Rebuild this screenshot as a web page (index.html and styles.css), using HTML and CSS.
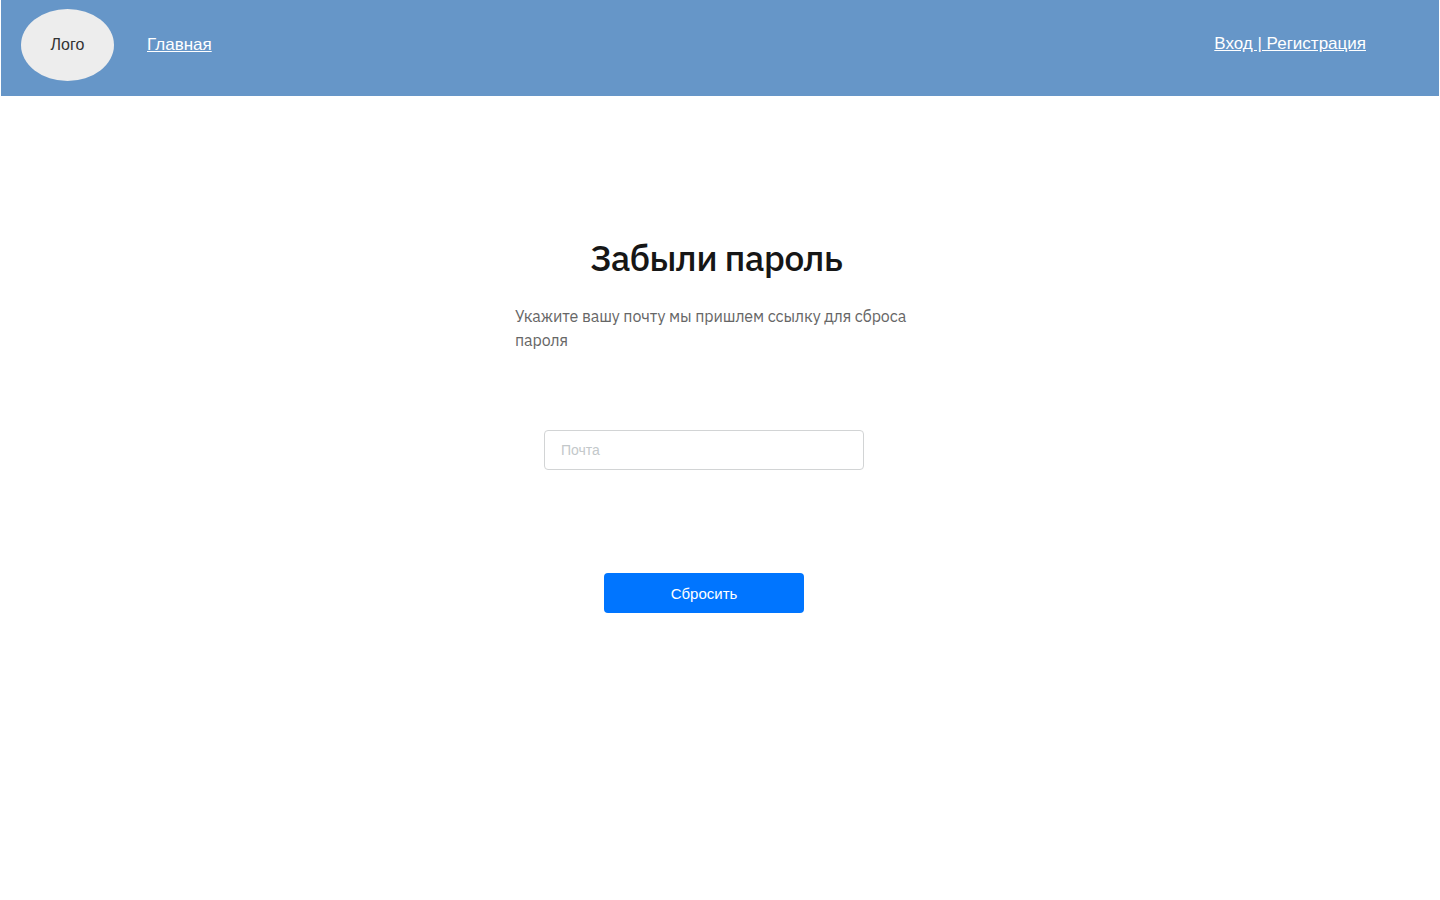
FILE: index.html
```html
<!DOCTYPE html>
<html lang="ru">
<head>
<meta charset="utf-8">
<title>Забыли пароль</title>
<link rel="stylesheet" href="styles.css">
</head>
<body>
<header class="header">
  <div class="logo">Лого</div>
  <a class="home" href="#">Главная</a>
  <a class="auth" href="#">Вход | Регистрация</a>
</header>
<main class="main">
  <h1 class="title">Забыли пароль</h1>
  <p class="hint">Укажите вашу почту мы пришлем ссылку для сброса<br>пароля</p>
  <form class="form">
    <input class="email" type="email" placeholder="Почта">
    <button class="submit" type="button">Сбросить</button>
  </form>
</main>
</body>
</html>
```
FILE: styles.css
```css
* { box-sizing: border-box; }
body { margin: 0; height: 900px; overflow: hidden; background: #fff; font-family: "Liberation Sans", Arial, sans-serif; }
.header { display: flex; align-items: flex-start; height: 96px; margin: 0 1px; padding: 9px 73px 0 20px; background: #6696c8; }
.logo { display: flex; align-items: center; justify-content: center; width: 93px; height: 72px; border-radius: 50%; background: #ededed; color: #333; font-size: 16px; }
.home, .auth { color: #fff; font-size: 17px; line-height: 20px; white-space: nowrap; }
.home { margin: 26px 0 0 33px; }
.auth { margin: 25px 0 0 auto; }
.main { display: flex; flex-direction: column; align-items: flex-start; width: 408px; margin: 138px 0 0 515px; font-family: "IBM Plex Sans", "Noto Sans", sans-serif; }
.title { margin: 0 0 0 75px; color: #161616; font-size: 36px; font-weight: 500; line-height: 48px; letter-spacing: -0.8px; white-space: nowrap; }
.hint { margin: 22px 0 0; color: #666; font-size: 16px; line-height: 24px; letter-spacing: -0.1px; white-space: nowrap; }
.form { display: flex; flex-direction: column; align-items: center; width: 320px; margin: 78px 0 0 29px; }
.email { width: 320px; height: 40px; padding: 0 16px; border: 1px solid #d2d4d5; border-radius: 4px; background: #fff; font: 14px "Liberation Sans", Arial, sans-serif; outline: 0; }
.email::placeholder { color: #c3c8ca; }
.submit { width: 200px; height: 40px; margin-top: 103px; padding: 0; border: 0; border-radius: 4px; background: #0075ff; color: #fff; font: 15px "Liberation Sans", Arial, sans-serif; }
```
